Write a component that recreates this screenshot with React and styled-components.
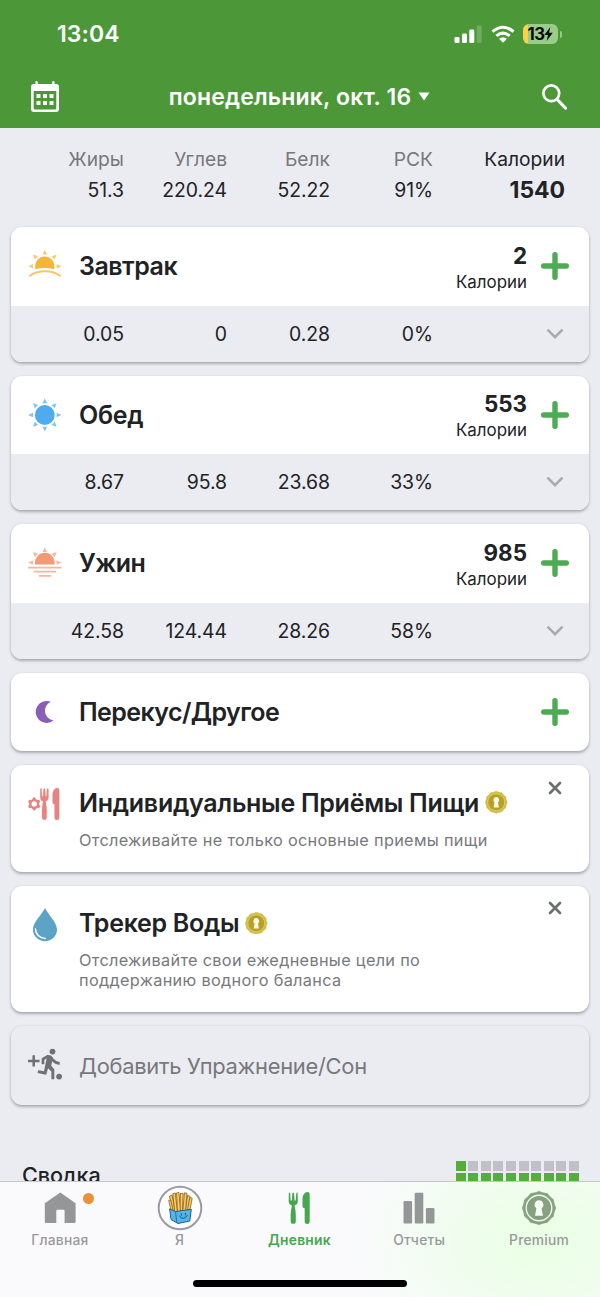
import styled, { createGlobalStyle } from "styled-components";

const GlobalStyle = createGlobalStyle`
  * {
    box-sizing: border-box;
  }
  body {
    margin: 0;
    background-color: #ebecf1;
    font-family: Inter, "Liberation Sans", sans-serif;
    color: #212225;
    overflow: hidden;
  }
`;

const Screen = styled.div`
  display: flex;
  flex-direction: column;
  width: 100%;
  height: 100vh;
  overflow: hidden;
`;

const Header = styled.header`
  flex: none;
  height: 127.5px;
  background-color: #4c9838;
  color: #fff;
`;

const StatusBar = styled.div`
  display: flex;
  justify-content: space-between;
  align-items: center;
  height: 68px;
  padding: 0 38px 0 57px;
`;

const Clock = styled.span`
  font-size: 23px;
  font-weight: 600;
  letter-spacing: 0.1px;
`;

const StatusIcons = styled.div`
  display: flex;
  align-items: center;
  gap: 8.5px;
`;

const NavBar = styled.div`
  display: flex;
  justify-content: space-between;
  align-items: center;
  height: 57px;
  padding: 0 31px 0 29px;
`;

const DateButton = styled.div`
  display: flex;
  align-items: center;
  gap: 7px;
  margin-right: 3px;
  font-size: 23px;
  font-weight: 600;
  letter-spacing: 0.16px;
  white-space: nowrap;
`;

const Content = styled.main`
  flex: 1;
  min-height: 0;
  overflow: hidden;
`;

const columns = "113px 103px 103px 103px 132px";

const Totals = styled.section`
  display: grid;
  grid-template-columns: ${columns};
  padding: 16px 0 0 11px;
  height: 99.5px;
  grid-template-rows: 31px 31px;
  align-items: center;
  text-align: right;
`;

const TotalLabel = styled.span`
  font-size: 19.2px;
  color: ${(p) => (p.$strong ? "#212225" : "#77787c")};
`;

const TotalValue = styled.span`
  font-size: ${(p) => (p.$strong ? "23px" : "19.4px")};
  font-weight: ${(p) => (p.$strong ? 700 : 400)};
  letter-spacing: -0.05px;
`;

const Cards = styled.section`
  display: flex;
  flex-direction: column;
  gap: 14px;
  padding: 0 11px;
`;

const Card = styled.article`
  flex: none;
  height: ${(p) => p.$height || "auto"};
  border-radius: 11px;
  background-color: ${(p) => (p.$muted ? "#ebecf1" : "#fff")};
  box-shadow: 0 2px 3px rgba(60, 62, 72, 0.36), 0 0 2px rgba(60, 62, 72, 0.12);
  overflow: hidden;
`;

const CardHead = styled.div`
  display: flex;
  align-items: center;
  height: 78.5px;
  padding: 0 19px 0 17px;
`;

const CardIcon = styled.div`
  display: flex;
  width: 34px;
  height: 34px;
  margin-right: 17px;
  flex: none;

  svg {
    flex: none;
  }
`;

const Title = styled.h2`
  display: flex;
  align-items: center;
  gap: 6px;
  flex: 1;
  margin: 0;
  font-size: 25px;
  line-height: 32px;
  font-weight: 600;
  letter-spacing: ${(p) => p.$spacing || -0.28}px;
  white-space: nowrap;
`;

const MutedTitle = styled(Title)`
  padding-top: 2px;
  font-size: 21.9px;
  font-weight: 400;
  color: #77787c;
`;

const Energy = styled.div`
  display: flex;
  flex-direction: column;
  align-items: flex-end;
  margin-right: 13px;
  padding-top: 4.5px;
`;

const EnergyValue = styled.span`
  font-size: 22.4px;
  line-height: 26px;
  font-weight: 700;
`;

const EnergyUnit = styled.span`
  font-size: 16.9px;
  line-height: 26px;
`;

const CardFoot = styled.div`
  display: grid;
  grid-template-columns: ${columns};
  align-items: center;
  height: 56px;
  background-color: #ebecf1;
  font-size: 19.4px;
  letter-spacing: -0.05px;
  text-align: right;
`;

const Chevron = styled.svg`
  justify-self: end;
  margin-right: 1px;
`;

const PromoHead = styled.div`
  display: flex;
  align-items: flex-start;
  height: 100%;
  padding: 21.5px 27px 0 17px;
`;

const PromoText = styled.div`
  flex: 1;
`;

const PromoNote = styled.p`
  margin: 11px 0 0;
  font-size: 16.3px;
  line-height: 20px;
  color: #77787c;
  letter-spacing: 0.31px;
  white-space: pre-line;
`;

const CloseIcon = styled.svg`
  flex: none;
  margin-top: -6px;
`;

const Summary = styled.section`
  display: flex;
  justify-content: space-between;
  align-items: flex-start;
  padding: 56px 21px 0 22px;
`;

const SummaryTitle = styled.h3`
  margin: 1px 0 0;
  font-size: 21.6px;
  line-height: 26px;
  font-weight: 500;
  letter-spacing: -0.1px;
`;

const Progress = styled.div`
  display: grid;
  grid-template-columns: repeat(10, 10px);
  grid-auto-rows: 10px;
  gap: 2.6px;
`;

const Cell = styled.span`
  background-color: ${(p) => (p.$on ? "#55ae3a" : "#c0c0c9")};
`;

const TabBar = styled.nav`
  flex: none;
  display: flex;
  flex-direction: column;
  align-items: center;
  height: 116px;
  border-top: 1px solid #c5c6cb;
  background: radial-gradient(
      ellipse 190px 130px at 540px 60px,
      #e9ffe3 0%,
      #f0fdee 45%,
      rgba(251, 251, 252, 0) 100%
    ),
    #fafafc;
`;

const Tabs = styled.div`
  display: grid;
  grid-template-columns: repeat(5, 1fr);
  width: 100%;
  height: 98px;
  padding-right: 1px;
`;

const Tab = styled.div`
  display: flex;
  flex-direction: column;
  align-items: center;
  color: ${(p) => (p.$active ? "#47a74e" : "#98999c")};
  font-size: 13.8px;
  font-weight: ${(p) => (p.$active ? 600 : 500)};
  line-height: 16px;
  letter-spacing: 0.25px;
`;

const TabIcon = styled.div`
  position: relative;
  display: flex;
  align-items: center;
  justify-content: center;
  width: 46px;
  height: 46px;
  margin: 3px 0 1px;
`;

const Dot = styled.i`
  position: absolute;
  top: 8px;
  right: -11px;
  width: 11px;
  height: 11px;
  border-radius: 50%;
  background-color: #ec9039;
`;

const HomeIndicator = styled.div`
  width: 214px;
  height: 7px;
  border-radius: 4px;
  background-color: #000;
`;

const rays = (angles, cx, cy) =>
  angles.map((a) => (
    <path
      key={a}
      d={`M${cx - 2.3} ${cy - 11.8}L${cx} ${cy - 16.6}L${cx + 2.3} ${cy - 11.8}Z`}
      transform={`rotate(${a} ${cx} ${cy})`}
      opacity="0.72"
    />
  ));

const SunriseIcon = () => (
  <svg width="34" height="34" viewBox="0 0 34 34" fill="#f3b63c">
    {rays([-90, -45, 0, 45, 90], 16.8, 17.3)}
    <path d="M7.4 20.3C6 13.5 10.5 7.6 16.8 7.6S27.6 13.5 26.2 20.3Q16.8 17.8 7.4 20.3Z" />
    <path d="M1.3 27.2C9.5 20.5 24.5 20.5 32.5 27.2" fill="none" stroke="#f5c66a" strokeWidth="2" />
  </svg>
);

const SunIcon = () => (
  <svg width="34" height="34" viewBox="0 0 34 34" fill="#4eabf0">
    {rays([0, 45, 90, 135, 180, 225, 270, 315], 16.8, 17)}
    <circle cx="16.8" cy="17" r="9.9" />
  </svg>
);

const SunsetIcon = () => (
  <svg width="34" height="34" viewBox="0 0 34 34" fill="#f09a76">
    <clipPath id="horizon">
      <path d="M0 0H34V18.4H0Z" />
    </clipPath>
    <g clipPath="url(#horizon)">{rays([-85, -45, 0, 45, 85], 16.8, 17.8)}</g>
    <path d="M7 18.4C6.5 11.5 11 6.8 16.8 6.8S27.1 11.5 26.6 18.4Z" />
    <path d="M0 21.6H33.5M5.7 25.7H28M11 29.9H23" stroke="#f4b79d" strokeWidth="1.8" />
  </svg>
);

const MoonIcon = () => (
  <svg width="34" height="34" viewBox="0 0 34 34" fill="#8a5db9">
    <path d="M22.8 6.8A11 11 0 1 0 25.6 25.5A9.8 9.8 0 0 1 22.8 6.8Z" />
  </svg>
);

const Cutlery = ({ x = 0, y = 0 }) => (
  <g transform={`translate(${x} ${y})`}>
    <path d="M0.3 1.2Q0.4 0.5 1 0.5T1.7 1.2L2.1 8.5H3.3L3.9 1.2Q4 0.5 4.7 0.5T5.5 1.2L6.1 8.5H7.2L7.8 1.2Q7.9 0.5 8.5 0.5T9.2 1.2L9.3 9.5Q9.3 12.3 6.4 13.3L6 16.5H3.5L3.1 13.3Q0.2 12.3 0.2 9.5Z" />
    <path d="M3.2 15H6.2Q7.3 19 7.3 23V29.3A2.55 2.55 0 0 1 2.2 29.3V23Q2.2 19 3.2 15Z" />
    <path d="M14 7C14 3 16.3 0 19 0Q21.2 0 21.2 2.4V29.5A2.5 2.5 0 0 1 16.2 29.5V16.3Q14 16.3 14 14.3Z" />
  </g>
);

const CustomMealIcon = () => (
  <svg width="34" height="34" viewBox="0 0 34 34" fill="#e58582">
    <circle cx="6.2" cy="16.9" r="3.9" fill="none" stroke="#e58582" strokeWidth="2.5" />
    {[0, 60, 120, 180, 240, 300].map((a) => (
      <path key={a} d="M4.300 13.300L5 10.500H7.400L8.100 13.300Z" transform={`rotate(${a} 6.2 16.9)`} />
    ))}
    <g transform="scale(0.9 1)" stroke="#e58582" strokeWidth="0.4">
      <Cutlery x={13.4} y={1} />
    </g>
  </svg>
);

const DropIcon = () => (
  <svg width="34" height="36" viewBox="0 0 34 36">
    <path d="M17 1C14.5 7 4.9 15 4.9 22.5A12.05 11.8 0 0 0 29 22.5C29 15 19.5 7 17 1Z" fill="#5ca3c6" />
    <path d="M7.5 22C7.5 27 11.5 31.3 17.3 31.5" fill="none" stroke="#fff" strokeWidth="1.5" strokeLinecap="round" />
  </svg>
);

const point = (deg, r) => {
  const a = (deg * Math.PI) / 180;
  return `${(17 + r * Math.sin(a)).toFixed(2)} ${(17 - r * Math.cos(a)).toFixed(2)}`;
};

// twelve shallow scallops around the rim
const scallop =
  `M${point(0, 16.6)}` +
  Array.from({ length: 12 }, (_, i) => `Q${point(i * 30 + 15, 15.3)} ${point(i * 30 + 30, 16.6)}`).join("") +
  "Z";

const Badge = ({ size, outer, ring, inner, hole }) => (
  <svg width={size} height={size} viewBox="0 0 34 34">
    <path d={scallop} fill={outer} stroke={outer} strokeWidth="0.8" strokeLinejoin="round" />
    <circle cx="17" cy="17" r="12.8" fill={inner} stroke={ring} strokeWidth="1.4" />
    <path d="M17 9.2A4.5 4.5 0 0 1 19.6 17.3L21 24.8H13L14.4 17.3A4.5 4.5 0 0 1 17 9.2Z" fill={hole} />
  </svg>
);

const GoldBadge = () => <Badge size={22.5} outer="#d1bd45" ring="#dccf6b" inner="#b99f27" hole="#fffbe0" />;

const RunIcon = () => (
  <svg width="36" height="34" viewBox="0 0 36 34" fill="#6f7074">
    <path d="M0 12.900H11.500M5.700 7.200V18.600" stroke="#6f7074" strokeWidth="2.500" />
    <circle cx="24.500" cy="3.600" r="2.900" />
    <circle cx="31.100" cy="28.600" r="2.900" />
    <path
      d="M20.300 7.900L15 11.100V16.300M21.300 8.600L24.800 11.900Q27.500 15.300 31.700 15.300"
      fill="none"
      stroke="#6f7074"
      strokeWidth="2.700"
    />
    <path d="M19.300 7.200Q23.200 6.500 25 9.800L23.200 17.800L26.300 21.200V31.200H23.400V23.400L20 20.300L18.200 26.700L9.600 25L10.200 22.200L16 23.200L18.500 11Z" />
  </svg>
);

const Plus = () => (
  <svg width="30" height="30" viewBox="0 0 30 30" stroke="#4dab54" strokeWidth="5.4" strokeLinecap="round">
    <path d="M15 3.7V26.3M3.7 15H26.3" />
  </svg>
);

const Close = () => (
  <CloseIcon width="14" height="14" viewBox="0 0 14 14" stroke="#6e6f72" strokeWidth="2.7" strokeLinecap="round">
    <path d="M2 2L12 12M12 2L2 12" />
  </CloseIcon>
);

const CalendarIcon = () => (
  <svg width="32" height="34" viewBox="0 0 32 34" fill="#fff">
    <path
      fillRule="evenodd"
      d="M6.4 2.2Q6.4 1 7.6 1T8.8 2.2V4H23.2V2.2Q23.2 1 24.4 1T25.6 2.2V4H27Q30 4 30 7V29Q30 32 27 32H5Q2 32 2 29V7Q2 4 5 4H6.4ZM4.7 11V28.2Q4.7 29.5 6 29.5H26Q27.3 29.5 27.3 28.2V11Z"
    />
    {[14, 21].map((y) => [7.5, 14, 20.5].map((x) => <rect key={`${x}-${y}`} x={x} y={y} width="4" height="4" rx="0.5" />))}
  </svg>
);

const SearchIcon = () => (
  <svg width="28" height="28" viewBox="0 0 28 28" fill="none" stroke="#fff">
    <circle cx="10.3" cy="10.3" r="7.9" strokeWidth="2.7" />
    <path d="M16.1 16.4L24.6 25.2" strokeWidth="3" strokeLinecap="round" />
  </svg>
);

const SignalIcon = () => (
  <svg width="28" height="19" viewBox="0 0 28 19" fill="#fff">
    <rect x="0.5" y="12" width="5" height="6" rx="1.2" />
    <rect x="8" y="8.5" width="5" height="9.5" rx="1.2" />
    <rect x="15.3" y="4.5" width="5" height="13.5" rx="1.2" />
    <rect x="22.7" y="0.5" width="5" height="17.5" rx="1.2" opacity="0.2" />
  </svg>
);

const WifiIcon = () => (
  <svg width="24" height="18" viewBox="0 0 24 18" fill="none" stroke="#fff" strokeWidth="3">
    <path d="M1.5 6.7Q12 -2.3 22.5 6.7M5.4 10.9Q12 5.4 18.6 10.9" />
    <path d="M8 13.8Q12 10.6 16 13.8L12 17.7Z" fill="#fff" stroke="none" />
  </svg>
);

const BatteryShell = styled.div`
  display: flex;
  align-items: center;
  gap: 2px;
`;

const BatteryBody = styled.div`
  display: flex;
  align-items: center;
  justify-content: center;
  width: 35px;
  height: 20px;
  border-radius: 6px;
  background: linear-gradient(90deg, #fbd24b 5px, #98ce8a 5px);
  color: #0b0b0b;
  font-size: 16.8px;
  font-weight: 700;
  letter-spacing: -0.6px;
`;

const BatteryCap = styled.i`
  width: 2px;
  height: 7px;
  border-radius: 0 3px 3px 0;
  background-color: #98ce8a;
`;

const Battery = () => (
  <BatteryShell>
    <BatteryBody>
      13
      <svg width="9" height="14" viewBox="0 0 9 14">
        <path d="M6.3 0L0.3 8H4L2.6 14L8.8 5.8H5.1Z" fill="#0b0b0b" />
      </svg>
    </BatteryBody>
    <BatteryCap />
  </BatteryShell>
);

const HomeIcon = () => (
  <svg width="32" height="32" viewBox="0 0 32 32" fill="#959698">
    <path d="M16.3 0.5L31.6 11.3V30Q31.6 31 30.6 31H20.6V19Q20.6 17.7 19.3 17.7H13.6Q12.3 17.7 12.3 19V31H1.8Q0.8 31 0.8 30V11.3Z" />
  </svg>
);

const FriesIcon = () => (
  <svg width="46" height="46" viewBox="0 0 46 46">
    <circle cx="23" cy="23" r="21.300" fill="#fdfdfe" stroke="#999ba3" strokeWidth="2" />
    <g fill="#f7cd62" stroke="#8a5c1c" strokeWidth="0.800" strokeLinejoin="round">
      <path d="M12.500 11L15 10.200L18.500 27H15.500Z" />
      <path d="M30.500 10.500L33 11.200L31 27H28Z" />
      <path d="M15.800 8.800L18.300 8L20.500 27H17.700Z" />
      <path d="M27.500 7.800L30 8.300L28.500 27H25.700Z" />
      <path d="M23.500 8.300L26.200 8.500L25.300 27H22.600Z" />
      <path d="M19.500 8L22 7.500L23.500 27H20.500Z" />
      <path d="M32.800 12.500L35.200 13.300L32.500 27H30Z" />
      <path d="M11.700 15.500L13.800 15L16.500 27H14.500Z" />
    </g>
    <path d="M12.600 23.800L18.500 26.500L34.300 24.300L32.800 36L21 38.500L14 34.500Z" fill="#53b3ea" stroke="#255f8c" strokeWidth="1" strokeLinejoin="round" />
    <path d="M18.500 26.500L19.800 37.500" stroke="#255f8c" strokeWidth="0.800" />
    <path d="M22.800 31.500Q26.800 36 30.200 30.500M24.400 29V30.300M28.400 28.500V29.800" fill="none" stroke="#1d4f7c" strokeWidth="1" strokeLinecap="round" />
  </svg>
);

const DiaryIcon = () => (
  <svg width="23" height="32" viewBox="0 0 22 32" fill="#47a74e">
    <Cutlery />
  </svg>
);

const ReportsIcon = () => (
  <svg width="32" height="32" viewBox="0 0 32 32" fill="#959698">
    <rect x="0.5" y="9" width="8.6" height="22.5" rx="1.2" />
    <rect x="11.7" y="0.7" width="8.6" height="30.8" rx="1.2" />
    <rect x="22.9" y="16" width="8.6" height="15.5" rx="1.2" />
  </svg>
);

const PremiumIcon = () => <Badge size={34} outer="#87a082" ring="#eafbe6" inner="#87a082" hole="#f2fff0" />;

const totals = [
  { label: "Жиры", value: "51.3" },
  { label: "Углев", value: "220.24" },
  { label: "Белк", value: "52.22" },
  { label: "РСК", value: "91%" },
  { label: "Калории", value: "1540", strong: true },
];

const meals = [
  { name: "Завтрак", spacing: -0.5, icon: <SunriseIcon />, energy: 2, values: ["0.05", "0", "0.28", "0%"] },
  { name: "Обед", icon: <SunIcon />, energy: 553, values: ["8.67", "95.8", "23.68", "33%"] },
  { name: "Ужин", spacing: -0.6, icon: <SunsetIcon />, energy: 985, values: ["42.58", "124.44", "28.26", "58%"] },
  { name: "Перекус/Другое", spacing: -0.58, icon: <MoonIcon /> },
];

const promos = [
  {
    name: "Индивидуальные Приёмы Пищи",
    icon: <CustomMealIcon />,
    note: "Отслеживайте не только основные приемы пищи",
    height: "106.5px",
  },
  {
    name: "Трекер Воды",
    icon: <DropIcon />,
    note: "Отслеживайте свои ежедневные цели по\nподдержанию водного баланса",
    height: "126.5px",
  },
];

const tabs = [
  { name: "Главная", icon: <HomeIcon />, dot: true },
  { name: "Я", icon: <FriesIcon /> },
  { name: "Дневник", icon: <DiaryIcon />, active: true },
  { name: "Отчеты", icon: <ReportsIcon /> },
  { name: "Premium", icon: <PremiumIcon /> },
];

const MealCard = ({ name, spacing, icon, energy, values }) => (
  <Card>
    <CardHead>
      <CardIcon>{icon}</CardIcon>
      <Title $spacing={spacing}>{name}</Title>
      {energy && (
        <Energy>
          <EnergyValue>{energy}</EnergyValue>
          <EnergyUnit>Калории</EnergyUnit>
        </Energy>
      )}
      <Plus />
    </CardHead>
    {values && (
      <CardFoot>
        {values.map((v, i) => (
          <span key={i}>{v}</span>
        ))}
        <Chevron width="18" height="12" viewBox="0 0 18 12" fill="none" stroke="#a9aaae" strokeWidth="2.6">
          <path d="M1.5 1.7L9 9.2L16.5 1.7" />
        </Chevron>
      </CardFoot>
    )}
  </Card>
);

const App = () => {
  return (
    <Screen>
      <GlobalStyle />
      <Header>
        <StatusBar>
          <Clock>13:04</Clock>
          <StatusIcons>
            <SignalIcon />
            <WifiIcon />
            <Battery />
          </StatusIcons>
        </StatusBar>
        <NavBar>
          <CalendarIcon />
          <DateButton>
            понедельник, окт. 16
            <svg width="12" height="9" viewBox="0 0 12 9">
              <path d="M0.5 0.5H11.5L6 8.5Z" fill="#fff" />
            </svg>
          </DateButton>
          <SearchIcon />
        </NavBar>
      </Header>

      <Content>
        <Totals>
          {totals.map((t) => (
            <TotalLabel key={t.label} $strong={t.strong}>
              {t.label}
            </TotalLabel>
          ))}
          {totals.map((t) => (
            <TotalValue key={t.label} $strong={t.strong}>
              {t.value}
            </TotalValue>
          ))}
        </Totals>

        <Cards>
          {meals.map((meal) => (
            <MealCard key={meal.name} {...meal} />
          ))}
          {promos.map((p) => (
            <Card key={p.name} $height={p.height}>
              <PromoHead>
                <CardIcon>{p.icon}</CardIcon>
                <PromoText>
                  <Title>
                    {p.name}
                    <GoldBadge />
                  </Title>
                  <PromoNote>{p.note}</PromoNote>
                </PromoText>
                <Close />
              </PromoHead>
            </Card>
          ))}
          <Card $muted>
            <CardHead>
              <CardIcon>
                <RunIcon />
              </CardIcon>
              <MutedTitle>Добавить Упражнение/Сон</MutedTitle>
            </CardHead>
          </Card>
        </Cards>

        <Summary>
          <SummaryTitle>Сводка</SummaryTitle>
          <Progress>
            {Array.from({ length: 30 }, (_, i) => (
              <Cell key={i} $on={i === 0 || i > 9} />
            ))}
          </Progress>
        </Summary>
      </Content>

      <TabBar>
        <Tabs>
          {tabs.map((t) => (
            <Tab key={t.name} $active={t.active}>
              <TabIcon>
                {t.icon}
                {t.dot && <Dot />}
              </TabIcon>
              {t.name}
            </Tab>
          ))}
        </Tabs>
        <HomeIndicator />
      </TabBar>
    </Screen>
  );
};

export default App;
